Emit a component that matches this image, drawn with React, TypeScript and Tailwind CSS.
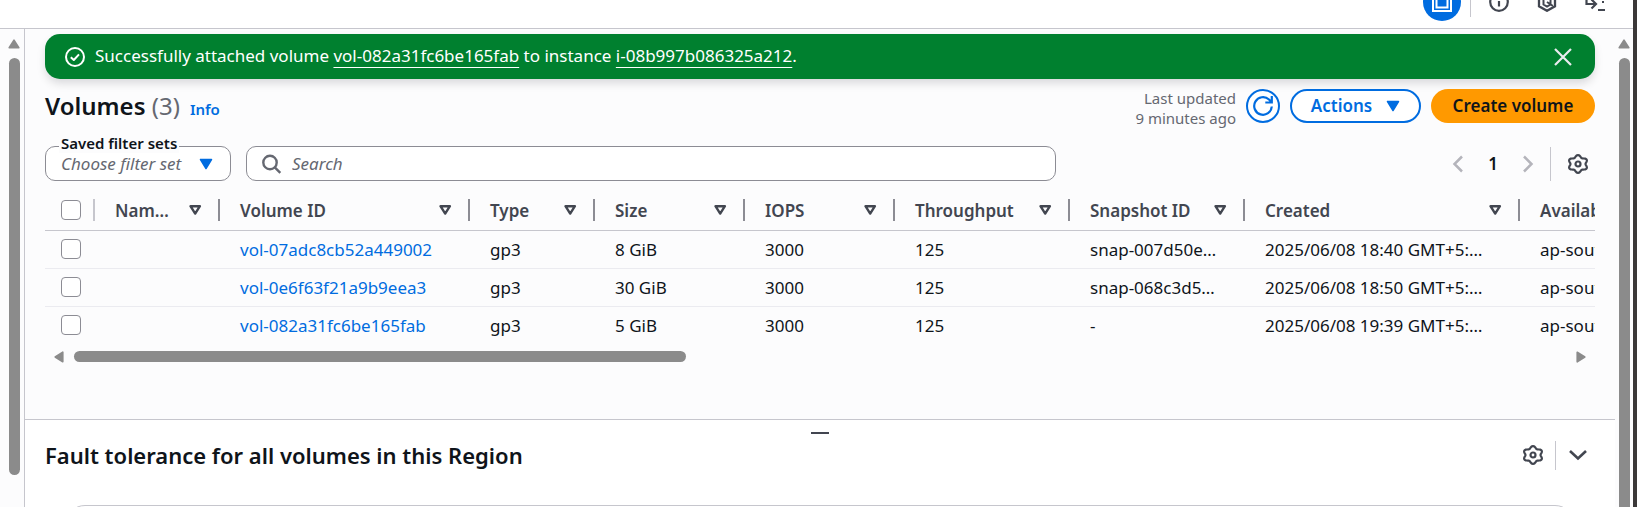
import React from "react";

type Volume = {
  id: string;
  type: string;
  size: string;
  iops: string;
  throughput: string;
  snapshot: string;
  created: string;
  zone: string;
};

const volumes: Volume[] = [
  { id: "vol-07adc8cb52a449002", type: "gp3", size: "8 GiB", iops: "3000", throughput: "125", snapshot: "snap-007d50e…", created: "2025/06/08 18:40 GMT+5:…", zone: "ap-south-1a" },
  { id: "vol-0e6f63f21a9b9eea3", type: "gp3", size: "30 GiB", iops: "3000", throughput: "125", snapshot: "snap-068c3d5…", created: "2025/06/08 18:50 GMT+5:…", zone: "ap-south-1a" },
  { id: "vol-082a31fc6be165fab", type: "gp3", size: "5 GiB", iops: "3000", throughput: "125", snapshot: "-", created: "2025/06/08 19:39 GMT+5:…", zone: "ap-south-1a" },
];

const columns = [
  { label: "Nam…", width: "w-[125px]" },
  { label: "Volume ID", width: "w-[250px]" },
  { label: "Type", width: "w-[125px]" },
  { label: "Size", width: "w-[150px]" },
  { label: "IOPS", width: "w-[150px]" },
  { label: "Throughput", width: "w-[175px]" },
  { label: "Snapshot ID", width: "w-[175px]" },
  { label: "Created", width: "w-[275px]" },
  { label: "Availability Zone", width: "w-[225px]" },
];

// Six-lobed outline of the settings gear, centred in a 20 x 20 box.
const gearPoints = Array.from({ length: 72 }, (_, i) => {
  const angle = (i * Math.PI) / 36;
  const radius = 7.8 + 1.1 * Math.cos(6 * angle);
  return `${(10 + radius * 1.12 * Math.sin(angle)).toFixed(2)},${(10 - radius * Math.cos(angle)).toFixed(2)}`;
}).join(" ");

function Gear() {
  return (
    <svg viewBox="0 0 20 20" className="size-5" fill="none" stroke="currentColor" strokeWidth="2.200" strokeLinejoin="round" aria-hidden="true">
      <polygon points={gearPoints} />
      <circle cx="10" cy="10" r="2.500" />
    </svg>
  );
}

function SortIcon() {
  return (
    <svg viewBox="0 0 13 12" className="h-3 w-[13px] shrink-0" fill="none" stroke="currentColor" strokeWidth="2.400" strokeLinejoin="round" aria-hidden="true">
      <path d="M1.500 2.200h9.400L6.200 9.600Z" />
    </svg>
  );
}

function Caret() {
  return (
    <svg viewBox="0 0 14 12" className="h-3 w-3.5 shrink-0" aria-hidden="true">
      <path d="M1.500 1.500h11L7 10.500Z" fill="#006ce0" stroke="#006ce0" strokeWidth="1.500" strokeLinejoin="round" />
    </svg>
  );
}

function ScrollArrow({ className }: { className: string }) {
  return (
    <svg viewBox="0 0 12 10" className={className} aria-hidden="true">
      <path d="M6 1.200 10.800 8.800H1.200Z" fill="#8b8b8b" stroke="#8b8b8b" strokeWidth="1.600" strokeLinejoin="round" />
    </svg>
  );
}

function Check({ label }: { label: string }) {
  return <input type="checkbox" aria-label={label} className="block size-5 appearance-none rounded-[4px] border border-[#8c8c94] bg-white" />;
}

function TopBar() {
  return (
    <header className="flex h-[29px] shrink-0 items-end justify-end overflow-hidden border-b border-[#c6c6cd] bg-white pr-7 pb-[7px]">
      <button type="button" aria-label="Layout" className="flex size-[38px] shrink-0 items-center justify-center rounded-full bg-[#006ce0] text-white">
        <svg viewBox="0 0 20 20" className="size-5" fill="none" stroke="currentColor" strokeWidth="2" aria-hidden="true">
          <path d="M1 1h18v18H1ZM4.500 7h11v8.500h-11Z" />
        </svg>
      </button>
      <div className="ml-[9px] h-[38px] w-px shrink-0 -translate-y-1 bg-[#c6c6cd]" />
      <div className="ml-[18px] flex h-[38px] shrink-0 items-center gap-7 text-[#424650]">
        <button type="button" aria-label="Information" className="size-5">
          <svg viewBox="0 0 20 20" className="size-5" fill="none" stroke="currentColor" strokeWidth="2.200" aria-hidden="true">
            <circle cx="10" cy="10" r="8.800" />
            <path d="M10 9v5.500M10 5v2" />
          </svg>
        </button>
        <button type="button" aria-label="Assistant" className="size-5">
          <svg viewBox="0 0 20 20" className="size-5" fill="none" stroke="currentColor" strokeWidth="2.300" aria-hidden="true">
            <path d="M10 1.200 18 5.700v8.600l-8 4.500-8-4.500V5.700Z" />
            <path d="M10 5.500 13.500 7.500v5l-3.500 2-3.500-2v-5ZM10 10l6 4" strokeWidth="2" />
          </svg>
        </button>
        <button type="button" aria-label="Terminal" className="size-5">
          <svg viewBox="0 0 20 20" className="size-5" fill="none" stroke="currentColor" strokeWidth="2.200" aria-hidden="true">
            <path d="M1.500 2v10H10M6.500 7.500 11 12l-4.500 4.500M13 18h7M17 10h2M17 2v3" />
          </svg>
        </button>
      </div>
    </header>
  );
}

function Banner() {
  return (
    <div className="flex h-[45px] items-center rounded-[15px] bg-[#00802f] pr-[22px] pl-5 text-white shadow-[0_5px_10px_-1px_rgba(0,7,22,0.15)]">
      <svg viewBox="0 0 20 20" className="size-5 shrink-0" fill="none" stroke="currentColor" strokeWidth="2" strokeLinejoin="round" aria-hidden="true">
        <circle cx="10" cy="10" r="9" />
        <path d="m5.800 10.200 3 2.800 5.200-5.600" />
      </svg>
      <p className="ml-2.5 flex-1 truncate pb-0.5 text-[17px] leading-[25px]">
        Successfully attached volume{" "}
        <a href="#volume" className="underline underline-offset-[5px]">vol-082a31fc6be165fab</a> to instance{" "}
        <a href="#instance" className="underline underline-offset-[5px]">i-08b997b086325a212</a>.
      </p>
      <button type="button" aria-label="Dismiss" className="size-5 shrink-0 text-[#ebebf0]">
        <svg viewBox="0 0 20 20" className="size-5" fill="none" stroke="currentColor" strokeWidth="2.200" aria-hidden="true">
          <path d="m2 2 16 16M18 2 2 18" />
        </svg>
      </button>
    </div>
  );
}

function PageHeader() {
  return (
    <div className="mt-2.5 flex h-[34px] items-center">
      <div className="flex items-baseline">
        <h1 className="text-[24px] leading-[30px] font-semibold">
          Volumes <span className="font-normal text-[#656871]">(3)</span>
        </h1>
        <a href="#info" className="ml-2.5 text-[15px] leading-5 font-semibold text-[#006ce0]">Info</a>
      </div>
      <div className="ml-auto flex h-[34px] items-center gap-2.5">
        <p className="pt-1 text-right text-[15px] leading-5 text-[#656871]">
          Last updated
          <br />9 minutes ago
        </p>
        <button type="button" aria-label="Refresh" className="flex size-[34px] items-center justify-center rounded-full border-2 border-[#006ce0] bg-white text-[#006ce0]">
          <svg viewBox="0 0 20 20" className="size-5 shrink-0" fill="none" stroke="currentColor" strokeWidth="2.200" aria-hidden="true">
            <path d="M18.800 10.500a8.800 8.800 0 1 1-2.800-7l2.500 2.600M18.800 0v6.500h-6.500" />
          </svg>
        </button>
        <button type="button" className="flex h-[34px] w-[131px] items-center justify-center gap-3.5 rounded-full border-2 border-[#006ce0] bg-white text-[17px] font-semibold text-[#006ce0]">
          Actions
          <Caret />
        </button>
        <button type="button" className="h-[34px] w-[164px] rounded-full bg-[#ff9900] text-[17px] font-semibold whitespace-nowrap text-[#0f141a]">
          Create volume
        </button>
      </div>
    </div>
  );
}

function Filters() {
  return (
    <div className="mt-[23px] flex h-[35px] items-center">
      <div className="relative h-[35px] w-[186px] shrink-0">
        <select id="filter-set" className="h-[35px] w-full appearance-none rounded-[10px] border border-[#8c8c94] bg-white pl-[15px] text-[17px] text-[#656871] italic">
          <option>Choose filter set</option>
        </select>
        <label htmlFor="filter-set" className="absolute -top-[13px] left-3.5 bg-[#fcfcfd] px-0.5 text-[15px] leading-5 font-semibold whitespace-nowrap">
          Saved filter sets
        </label>
        <div className="pointer-events-none absolute top-3 right-[18px]">
          <Caret />
        </div>
      </div>
      <div className="ml-[15px] flex h-[35px] w-[810px] items-center rounded-[10px] border border-[#8c8c94] bg-white pl-[15px]">
        <svg viewBox="0 0 20 20" className="size-5 shrink-0 text-[#656871]" fill="none" stroke="currentColor" strokeWidth="2.400" aria-hidden="true">
          <circle cx="8" cy="8.500" r="6.700" />
          <path d="m12.800 13.300 5.500 5.500" />
        </svg>
        <input type="search" aria-label="Search" placeholder="Search" className="ml-2.5 min-w-0 flex-1 bg-transparent text-[17px] outline-none placeholder:text-[#656871] placeholder:italic" />
      </div>
      <nav aria-label="Pagination" className="ml-auto flex h-[34px] items-center text-[#b4b4bb]">
        <button type="button" aria-label="Previous page" className="size-5">
          <svg viewBox="0 0 20 20" className="size-5" fill="none" stroke="currentColor" strokeWidth="2.500" aria-hidden="true">
            <path d="m14 2.500-7.500 7.500 7.500 7.500" />
          </svg>
        </button>
        <button type="button" className="w-[50px] text-[17px] font-semibold text-[#0f141a]">1</button>
        <button type="button" aria-label="Next page" className="size-5">
          <svg viewBox="0 0 20 20" className="size-5" fill="none" stroke="currentColor" strokeWidth="2.500" aria-hidden="true">
            <path d="m6 2.500 7.500 7.500-7.500 7.500" />
          </svg>
        </button>
        <div className="ml-3 h-[34px] w-px bg-[#c6c6cd]" />
        <button type="button" aria-label="Preferences" className="mr-[7px] ml-[17px] size-5 text-[#424650]">
          <Gear />
        </button>
      </nav>
    </div>
  );
}

function VolumeTable() {
  return (
    <div className="mt-2.5 overflow-hidden">
      <table className="w-[1700px] table-fixed border-collapse text-left text-[17px] leading-[25px]">
        <thead>
          <tr className="h-[39px] border-b border-[#c6c6cd] text-[#424650]">
            <th scope="col" className="w-[50px] p-0">
              <div className="flex h-[22px] items-center border-r-2 border-[#c6c6cd] pl-4">
                <Check label="Select all volumes" />
              </div>
            </th>
            {columns.map((column) => (
              <th key={column.label} scope="col" className={`${column.width} p-0 font-semibold`}>
                <div className="flex h-[22px] items-center justify-between border-r-2 border-[#8c8c94] pr-4 pl-5 whitespace-nowrap">
                  {column.label}
                  <SortIcon />
                </div>
              </th>
            ))}
          </tr>
        </thead>
        <tbody>
          {volumes.map((volume) => (
            <tr key={volume.id} className="h-[38px] border-b border-[#ebebf0] whitespace-nowrap last:border-b-0">
              <td className="p-0 pl-4">
                <Check label={`Select ${volume.id}`} />
              </td>
              <td className="p-0" />
              <td className="p-0 pl-5">
                <a href="#volume" className="text-[#006ce0]">{volume.id}</a>
              </td>
              <td className="p-0 pl-5">{volume.type}</td>
              <td className="p-0 pl-5">{volume.size}</td>
              <td className="p-0 pl-5">{volume.iops}</td>
              <td className="p-0 pl-5">{volume.throughput}</td>
              <td className="p-0 pl-5">{volume.snapshot}</td>
              <td className="p-0 pl-5">{volume.created}</td>
              <td className="p-0 pl-5">{volume.zone}</td>
            </tr>
          ))}
        </tbody>
      </table>
      <div className="mt-[5px] flex h-[15px] items-center px-2">
        <ScrollArrow className="h-2.5 w-3 -rotate-90" />
        <div className="mx-[9px] flex-1">
          <div className="h-[11px] w-[41%] rounded-full bg-[#8b8b8b]" />
        </div>
        <ScrollArrow className="h-2.5 w-3 rotate-90" />
      </div>
    </div>
  );
}

function SplitPanel() {
  return (
    <section className="flex h-[88px] shrink-0 flex-col overflow-hidden border-t border-[#c6c6cd] bg-white">
      <div className="flex h-[18px] shrink-0 items-end justify-center pb-1">
        <div className="h-0.5 w-[18px] bg-[#424650]" />
      </div>
      <div className="flex h-[34px] shrink-0 items-center pr-[27px] pl-5">
        <h2 className="text-[22px] leading-[28px] font-semibold whitespace-nowrap">Fault tolerance for all volumes in this Region</h2>
        <button type="button" aria-label="Panel preferences" className="ml-auto size-5 text-[#424650]">
          <Gear />
        </button>
        <div className="ml-3 h-[29px] w-px bg-[#c6c6cd]" />
        <button type="button" aria-label="Collapse panel" className="ml-3 size-5 text-[#424650]">
          <svg viewBox="0 0 20 20" className="size-5" fill="none" stroke="currentColor" strokeWidth="2.600" aria-hidden="true">
            <path d="m2 6 8 7.500L18 6" />
          </svg>
        </button>
      </div>
      <div className="mx-10 mt-[33px] h-10 shrink-0 rounded-[20px] border border-[#c6c6cd]" />
    </section>
  );
}

export default function App() {
  return (
    <div className="flex h-screen overflow-hidden bg-white font-['Noto_Sans','Open_Sans',sans-serif] text-[#0f141a]">
      <div className="flex min-w-0 flex-1 flex-col">
        <TopBar />
        <div className="flex min-h-0 flex-1">
          <div className="flex w-[25px] shrink-0 flex-col items-center border-r border-[#c6c6cd] bg-[#fcfcfd] pt-2.5 pl-1">
            <ScrollArrow className="h-2.5 w-3" />
            <div className="mt-[9px] mb-8 w-[11px] flex-1 rounded-full bg-[#8b8b8b]" />
          </div>
          <main className="flex min-w-0 flex-1 flex-col bg-[#fcfcfd]">
            <div className="min-h-0 flex-1 overflow-hidden pt-[5px] pr-5 pl-5">
              <Banner />
              <PageHeader />
              <Filters />
              <VolumeTable />
            </div>
            <SplitPanel />
          </main>
          <div className="flex w-[18px] shrink-0 flex-col items-center bg-[#fcfcfd] pt-2.5">
            <ScrollArrow className="h-2.5 w-3" />
            <div className="mt-[9px] w-[11px] flex-1 rounded-t-full bg-[#8b8b8b]" />
          </div>
        </div>
      </div>
      <div className="w-1 shrink-0 bg-[#3b3838]" />
    </div>
  );
}
